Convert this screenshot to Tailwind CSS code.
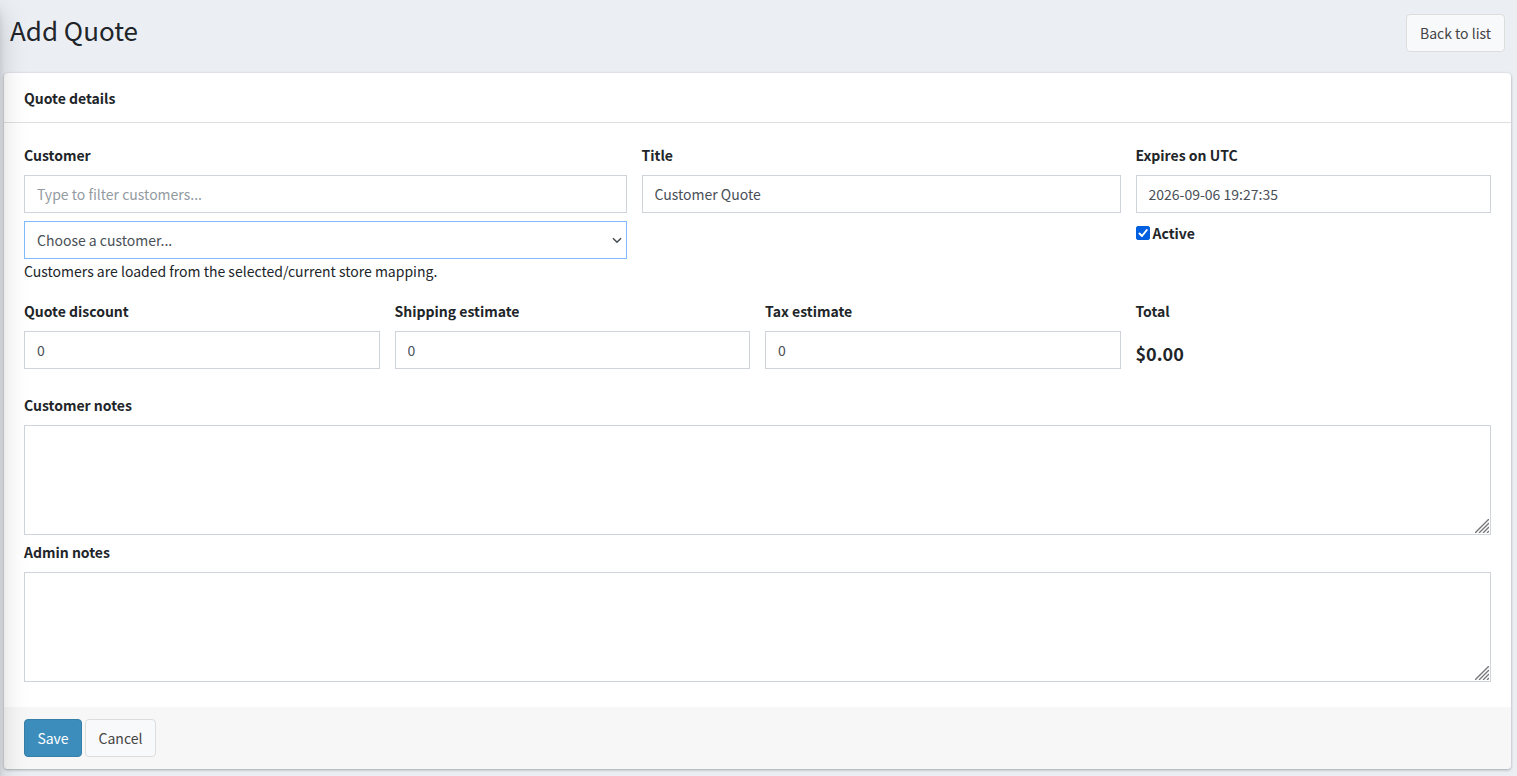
<!DOCTYPE html>
<html lang="en">
<head>
<meta charset="utf-8">
<meta name="viewport" content="width=device-width, initial-scale=1">
<title>Add Quote</title>
<script src="https://cdn.jsdelivr.net/npm/@tailwindcss/browser@4"></script>
</head>
<body class="min-h-screen overflow-x-hidden bg-[#ebeff4] font-['Source_Sans_Pro','Noto_Sans_CJK_SC',sans-serif] text-[14px] leading-6 text-[#212529]">
<!-- Edge shadow cast by the off-screen sidebar -->
<div class="pointer-events-none fixed inset-y-0 -left-[254px] z-10 w-[250px] shadow-[0_14px_28px_rgba(0,0,0,0.25),0_10px_10px_rgba(0,0,0,0.22)]"></div>

<form>
  <header class="flex items-start justify-between pt-[14px] pr-3 pb-[21px] pl-[10px]">
    <h1 class="text-[26px] leading-8">Add Quote</h1>
    <a href="#" class="min-w-[99px] rounded border border-[#dddddd] bg-[#f8f9fa] px-3 py-[6px] text-center text-[#444444]">Back to list</a>
  </header>

  <main class="mr-[6px] mb-[7px] ml-1 overflow-hidden rounded bg-white shadow-[0_0_1px_rgba(0,0,0,0.13),0_1px_3px_rgba(0,0,0,0.3)]">
    <div class="border-b border-[#dfdfdf] px-5 pt-[13px] pb-3">
      <h2 class="font-bold">Quote details</h2>
    </div>

    <div class="px-5 pt-5 pb-[25px]">
      <div class="grid grid-cols-12 gap-x-[15px]">
        <div class="col-span-5">
          <label for="filter" class="mb-2 block font-semibold">Customer</label>
          <input id="filter" type="text" placeholder="Type to filter customers..." class="block h-[38px] w-full border border-[#ced4da] bg-white px-3 text-[#495057] placeholder:text-[#939ba2]">
          <div class="relative mt-2">
            <select aria-label="Choose a customer" class="block h-[38px] w-full appearance-none border border-[#80bdff] bg-white px-3 text-[#495057] outline-none">
              <option>Choose a customer...</option>
            </select>
            <svg class="pointer-events-none absolute top-4 right-[5px] h-[7px] w-[10px]" viewBox="0 0 10 7" fill="none" stroke="#495057" stroke-width="1.6"><path d="M1 1.2 5 5.2 9 1.2"/></svg>
          </div>
          <p>Customers are loaded from the selected/current store mapping.</p>
        </div>
        <div class="col-span-4">
          <label for="title" class="mb-2 block font-semibold">Title</label>
          <input id="title" type="text" value="Customer Quote" class="block h-[38px] w-full border border-[#ced4da] bg-white px-3 text-[#495057]">
        </div>
        <div class="col-span-3">
          <label for="expires" class="mb-2 block font-semibold">Expires on UTC</label>
          <input id="expires" type="text" value="2026-09-06 19:27:35" class="block h-[38px] w-full border border-[#ced4da] bg-white px-3 text-[#495057]">
          <div class="mt-2 flex items-center gap-[3px]">
            <span class="relative size-[14px]">
              <input id="active" type="checkbox" checked class="peer block size-[14px] appearance-none rounded-[2px] border border-[#8f8f9d] bg-white checked:border-[#0060df] checked:bg-[#0060df]">
              <svg class="pointer-events-none absolute inset-0 hidden size-[14px] peer-checked:block" viewBox="0 0 14 14" fill="none" stroke="#fff" stroke-width="2" stroke-linecap="round" stroke-linejoin="round"><path d="M3.5 7.5 6 10 10.8 4"/></svg>
            </span>
            <label for="active" class="font-semibold">Active</label>
          </div>
        </div>
      </div>

      <div class="mt-4 grid grid-cols-4 gap-x-[15px]">
        <div>
          <label for="discount" class="mb-2 block font-semibold">Quote discount</label>
          <input id="discount" type="text" value="0" class="block h-[38px] w-full border border-[#ced4da] bg-white px-3 text-[#495057]">
        </div>
        <div>
          <label for="shipping" class="mb-2 block font-semibold">Shipping estimate</label>
          <input id="shipping" type="text" value="0" class="block h-[38px] w-full border border-[#ced4da] bg-white px-3 text-[#495057]">
        </div>
        <div>
          <label for="tax" class="mb-2 block font-semibold">Tax estimate</label>
          <input id="tax" type="text" value="0" class="block h-[38px] w-full border border-[#ced4da] bg-white px-3 text-[#495057]">
        </div>
        <div>
          <div class="mb-2 font-semibold">Total</div>
          <output class="block pt-2 text-[18px] leading-7 font-bold">$0.00</output>
        </div>
      </div>

      <div class="mt-6">
        <label for="customer-notes" class="mb-2 block font-semibold">Customer notes</label>
        <div class="relative">
          <textarea id="customer-notes" class="block h-[110px] w-full resize-y border border-[#ced4da] bg-white px-3 py-[6px] text-[#495057] [&::-webkit-resizer]:hidden"></textarea>
          <svg class="pointer-events-none absolute right-[2px] bottom-[2px] size-[14px]" viewBox="0 0 14 14" fill="none" stroke="#77777b" stroke-width="1.4"><path d="M0 14 14 0M4 14 14 4M8 14 14 8M12 14 14 12"/></svg>
        </div>
      </div>
      <div class="mt-[5px]">
        <label for="admin-notes" class="mb-2 block font-semibold">Admin notes</label>
        <div class="relative">
          <textarea id="admin-notes" class="block h-[110px] w-full resize-y border border-[#ced4da] bg-white px-3 py-[6px] text-[#495057] [&::-webkit-resizer]:hidden"></textarea>
          <svg class="pointer-events-none absolute right-[2px] bottom-[2px] size-[14px]" viewBox="0 0 14 14" fill="none" stroke="#77777b" stroke-width="1.4"><path d="M0 14 14 0M4 14 14 4M8 14 14 8M12 14 14 12"/></svg>
        </div>
      </div>
    </div>

    <footer class="flex gap-[3px] bg-[#f7f7f7] px-5 py-3">
      <button type="submit" class="min-w-[58px] rounded border border-[#367fa9] bg-[#3c8dbc] px-3 py-[6px] text-white">Save</button>
      <button type="button" class="min-w-[71px] rounded border border-[#dddddd] bg-[#f8f9fa] px-3 py-[6px] text-[#444444]">Cancel</button>
    </footer>
  </main>
</form>
</body>
</html>
